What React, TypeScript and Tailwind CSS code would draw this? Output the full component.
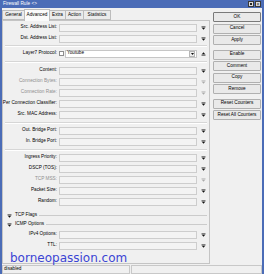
import React from 'react';

function DropArrow({ gray }: { gray?: boolean }) {
  const c = gray ? '#a9a9a9' : '#111';
  return (
    <svg width="5" height="4" viewBox="0 0 5 4" className="shrink-0">
      <rect x="0.5" y="0.5" width="4" height="0.8" fill={c} />
      <path d="M0.8 1.7H4.2L2.5 3.8Z" fill={c} />
    </svg>
  );
}

function UpArrow() {
  return (
    <svg width="5" height="4" viewBox="0 0 5 4" className="shrink-0">
      <path d="M0.8 2.3H4.2L2.5 0.2Z" fill="#111" />
      <rect x="0.5" y="2.7" width="4" height="0.8" fill="#111" />
    </svg>
  );
}

function Row({ label, gray }: { label: string; gray?: boolean }) {
  return (
    <div className="flex items-center h-[11px]">
      <div
        className={`w-[55px] pr-[1px] flex justify-end whitespace-nowrap ${
          gray ? 'text-[#8f8f8f]' : 'text-black'
        }`}
      >
        <span>{label}</span>
      </div>
      <div className="ml-[1px] w-[138px] h-[8px] border border-[#cdcdcd] bg-[#f3f3f3]" />
      <div className="ml-[4px]">
        <DropArrow gray={gray} />
      </div>
    </div>
  );
}

function Sep({ h }: { h: string }) {
  return (
    <div className={`${h} flex flex-col justify-center px-[2px]`}>
      <div className="h-[2px] border-t border-[#d6d6d6] border-b border-b-white" />
    </div>
  );
}

function Section({ label }: { label: string }) {
  return (
    <div className="flex items-center h-[9px] pl-[4px]">
      <DropArrow />
      <span className="ml-[3px] whitespace-nowrap">{label}</span>
      <div className="flex-1 ml-[2px] mr-[2px] h-px bg-[#cbcbcb]" />
    </div>
  );
}

function Btn({ label, main }: { label: string; main?: boolean }) {
  return (
    <div
      className={`w-[48px] h-[10px] rounded-[1px] border bg-[#e9e9e9] flex items-center justify-center ${
        main ? 'border-[#7a7a7a]' : 'border-[#b0b0b0]'
      }`}
    >
      {label}
    </div>
  );
}

const tabs = [
  { name: 'General', w: 'w-[23px]' },
  { name: 'Advanced', w: 'w-[26px]', active: true },
  { name: 'Extra', w: 'w-[17px]' },
  { name: 'Action', w: 'w-[19px]' },
  { name: 'Statistics', w: 'w-[28px]' },
];

export default function App() {
  return (
    <div className="w-[264px] h-[274px] overflow-hidden bg-[#4b6cb7] flex flex-col font-['Liberation_Sans',Arial,sans-serif] text-[4.7px] leading-none text-black">
      <div className="h-[8px] shrink-0 flex items-center justify-between pl-[3px] pr-[3px] text-white">
        <span>Firewall Rule &lt;&gt;</span>
        <div className="flex gap-[1px]">
          <div className="w-[6px] h-[6px] bg-[#dadada] border border-[#3a3a3a] flex items-center justify-center">
            <div className="w-[2px] h-[2px] border border-[#222]" />
          </div>
          <div className="w-[6px] h-[6px] bg-[#dadada] border border-[#3a3a3a] flex items-center justify-center text-[5px] text-[#222]">
            ×
          </div>
        </div>
      </div>

      <div className="flex-1 mx-[2px] bg-[#f0f0f0] flex flex-col relative">
        <div className="flex h-[256px] shrink-0">
          <div className="w-[208px] flex flex-col">
            <div className="h-[12px] flex items-end">
              {tabs.map((t) => (
                <div
                  key={t.name}
                  className={`${t.w} -ml-px first:ml-0 flex items-center justify-center border border-[#bcbcbc] ${
                    t.active
                      ? 'h-[12px] bg-[#fafafa] border-b-0 relative z-10 -mb-px'
                      : 'h-[10px] bg-[#ebebeb]'
                  }`}
                >
                  {t.name}
                </div>
              ))}
            </div>
            <div className="flex-1 border border-[#c4c4c4] bg-[#f0f0f0] flex flex-col pt-[1px]">
              <Row label="Src. Address List:" />
              <Row label="Dst. Address List:" />
              <Sep h="h-[4px]" />
              <div className="flex items-center h-[11px]">
                <div className="w-[55px] pr-[1px] flex justify-end whitespace-nowrap">
                  <span>Layer7 Protocol:</span>
                </div>
                <div className="ml-[1px] w-[5px] h-[5px] border border-[#8c8c8c] bg-white" />
                <div className="ml-[1px] w-[132px] h-[8px] border border-[#c6c6c6] bg-white flex items-center pl-[1px] pr-px">
                  <span className="flex-1">Youtube</span>
                  <div className="w-[6px] h-[6px] border border-[#b5b5b5] bg-[#eeeeee] flex items-center justify-center">
                    <svg width="3" height="2" viewBox="0 0 3 2">
                      <path d="M0 0H3L1.5 2Z" fill="#111" />
                    </svg>
                  </div>
                </div>
                <div className="ml-[4px]">
                  <UpArrow />
                </div>
              </div>
              <Sep h="h-[6px]" />
              <Row label="Content:" />
              <Row label="Connection Bytes:" gray />
              <Row label="Connection Rate:" gray />
              <Row label="Per Connection Classifier:" />
              <Row label="Src. MAC Address:" />
              <Sep h="h-[5px]" />
              <Row label="Out. Bridge Port:" />
              <Row label="In. Bridge Port:" />
              <Sep h="h-[5px]" />
              <Row label="Ingress Priority:" />
              <Row label="DSCP (TOS):" />
              <Row label="TCP MSS:" gray />
              <Row label="Packet Size:" />
              <Row label="Random:" />
              <div className="h-[4px]" />
              <Section label="TCP Flags" />
              <Section label="ICMP Options" />
              <Row label="IPv4 Options:" />
              <Row label="TTL:" />
            </div>
          </div>

          <div className="flex-1 flex flex-col pt-[4px] pl-[3px] gap-[1.5px]">
            <Btn label="OK" main />
            <Btn label="Cancel" />
            <Btn label="Apply" />
            <div className="h-[1.5px]" />
            <Btn label="Enable" />
            <Btn label="Comment" />
            <Btn label="Copy" />
            <Btn label="Remove" />
            <div className="h-[1.5px]" />
            <Btn label="Reset Counters" />
            <Btn label="Reset All Counters" />
          </div>
        </div>

        <div className="flex-1 flex gap-[1px] pt-[1px]">
          <div className="w-[128px] border border-[#c8c8c8] flex items-center px-[1px]">disabled</div>
          <div className="flex-1 border border-[#c8c8c8]" />
        </div>

        <div className="absolute left-[8px] top-[244px] font-['DejaVu_Sans',sans-serif] text-[12px] leading-[12px] text-[#3b44d4] whitespace-nowrap">
          borneopassion.com
        </div>
      </div>
    </div>
  );
}
